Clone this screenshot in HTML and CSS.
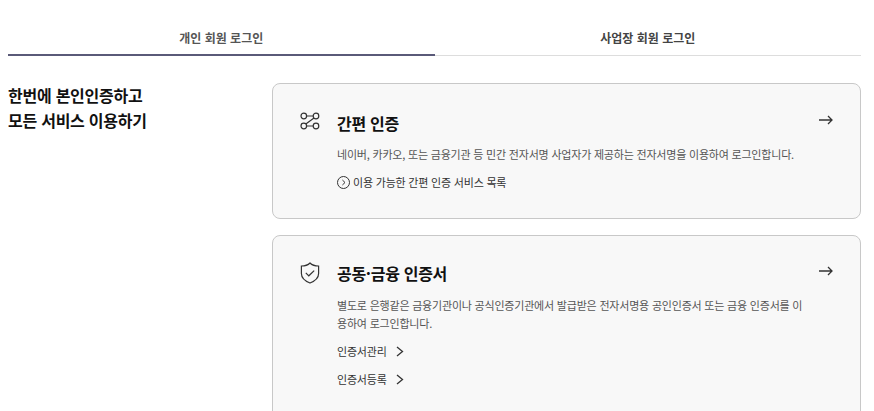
FILE: index.html
```html
<!DOCTYPE html>
<html lang="ko">
<head>
	<meta charset="UTF-8">
	<title>로그인</title>
	<link rel="stylesheet" href="styles.css">
</head>
<body>

<div class="tabs">
	<a class="tab on">개인 회원 로그인</a>
	<a class="tab">사업장 회원 로그인</a>
</div>

<div class="wrap">
	<h2 class="lead">한번에 본인인증하고<br>모든 서비스 이용하기</h2>

	<div class="cards">
		<div class="card card-easy">
			<svg class="card-icon" width="20" height="20" viewBox="0 0 20 20" fill="none" stroke="#333" stroke-width="1.2">
				<circle cx="3.8" cy="5" r="2.8"/>
				<circle cx="16" cy="5" r="2.8"/>
				<circle cx="3.8" cy="15" r="2.8"/>
				<circle cx="16" cy="15" r="2.8"/>
				<path d="M6.6 5h6.6M6.600 15h6.600M5.800 13 14 7"/>
			</svg>
			<div class="card-body">
				<h3 class="card-title">간편 인증</h3>
				<p class="card-desc">네이버, 카카오, 또는 금융기관 등 민간 전자서명 사업자가 제공하는 전자서명을 이용하여 로그인합니다.</p>
				<a class="more">
					<svg width="13" height="13" viewBox="0 0 13 13" fill="none" stroke="#333" stroke-width="1">
						<circle cx="6.5" cy="6.5" r="6"/>
						<path d="M5.4 4 8 6.5 5.4 9"/>
					</svg>
					이용 가능한 간편 인증 서비스 목록
				</a>
			</div>
			<svg class="card-arrow" width="14" height="10" viewBox="0 0 14 10" fill="none" stroke="#333" stroke-width="1.3">
				<path d="M0 5h13M9 1l4 4-4 4"/>
			</svg>
		</div>

		<div class="card card-cert">
			<svg class="card-icon" width="20" height="22" viewBox="0 0 20 22" fill="none" stroke="#333" stroke-width="1.2">
				<path d="M10 1c2 2 5 3 8.600 3v7.500c0 4.500-3.600 7.500-8.600 9.500-5-2-8.600-5-8.600-9.500V4C5 4 8 3 10 1z"/>
				<path d="M5.800 10.800 8.800 13.800 14.200 8.600"/>
			</svg>
			<div class="card-body">
				<h3 class="card-title">공동·금융 인증서</h3>
				<p class="card-desc">별도로 은행같은 금융기관이나 공식인증기관에서 발급받은 전자서명용 공인인증서 또는 금융 인증서를 이용하여 로그인합니다.</p>
				<a class="more link">인증서관리
					<svg width="8" height="11" viewBox="0 0 8 11" fill="none" stroke="#333" stroke-width="1.300"><path d="M1 1l5.500 4.500L1 10"/></svg>
				</a>
				<a class="more link">인증서등록
					<svg width="8" height="11" viewBox="0 0 8 11" fill="none" stroke="#333" stroke-width="1.300"><path d="M1 1l5.500 4.500L1 10"/></svg>
				</a>
			</div>
			<svg class="card-arrow" width="14" height="10" viewBox="0 0 14 10" fill="none" stroke="#333" stroke-width="1.3">
				<path d="M0 5h13M9 1l4 4-4 4"/>
			</svg>
		</div>
	</div>
</div>

</body>
</html>
```

FILE: styles.css
```css
html, body {
	height: 411px;
	overflow: hidden;
}
body {
	margin: 0;
	padding: 0 13px 0 8px;
	background-color: #fff;
	color: #111;
	font-family: "Noto Sans CJK KR", "Noto Sans", sans-serif;
}

.tabs {
	display: flex;
	height: 56px;
	box-sizing: border-box;
	border-bottom: 1px solid #ddd;
}
.tab {
	flex: 1;
	padding-top: 29px;
	box-sizing: border-box;
	height: 56px;
	text-align: center;
	font-size: 12px;
	line-height: 18px;
	font-weight: 700;
	color: #444;
}
.tab.on {
	color: #555;
	border-bottom: 2px solid #5a5a78;
}

.wrap {
	display: flex;
	padding-top: 27px;
}
.lead {
	width: 264px;
	flex: none;
	margin: 0;
	font-size: 16px;
	line-height: 25px;
	font-weight: 700;
	letter-spacing: -0.25px;
	color: #111;
}
.cards {
	flex: 1;
	display: flex;
	flex-direction: column;
	gap: 16px;
}

.card {
	display: flex;
	align-items: flex-start;
	padding: 26px 27px 28px 27px;
	background-color: #f8f8f8;
	border: 1px solid #c8c8c8;
	border-radius: 8px;
}
.card-easy {
	height: 136px;
	box-sizing: border-box;
}
.card-cert {
	padding-top: 24px;
}
.card-cert .card-title {
	margin-bottom: 10px;
}
.card-cert .card-icon {
	margin-top: 2px;
}
.card-cert .card-arrow {
	margin-top: 6px;
}
.card-icon {
	flex: none;
	margin-top: 1px;
	margin-right: 17px;
}
.card-body {
	flex: 1;
	min-width: 0;
}
.card-title {
	margin: 0 0 9px;
	font-size: 16px;
	line-height: 26px;
	font-weight: 700;
	letter-spacing: -0.3px;
	color: #111;
}
.card-desc {
	margin: 0 0 10px;
	font-size: 11px;
	line-height: 18px;
	letter-spacing: -0.2px;
	color: #555;
}
.more {
	display: flex;
	align-items: center;
	gap: 3px;
	font-size: 11px;
	line-height: 18px;
	letter-spacing: -0.2px;
	color: #333;
}
.more.link {
	gap: 9px;
	margin-bottom: 10px;
}
.card-arrow {
	flex: none;
	margin-top: 5px;
	margin-left: 14px;
}
```
